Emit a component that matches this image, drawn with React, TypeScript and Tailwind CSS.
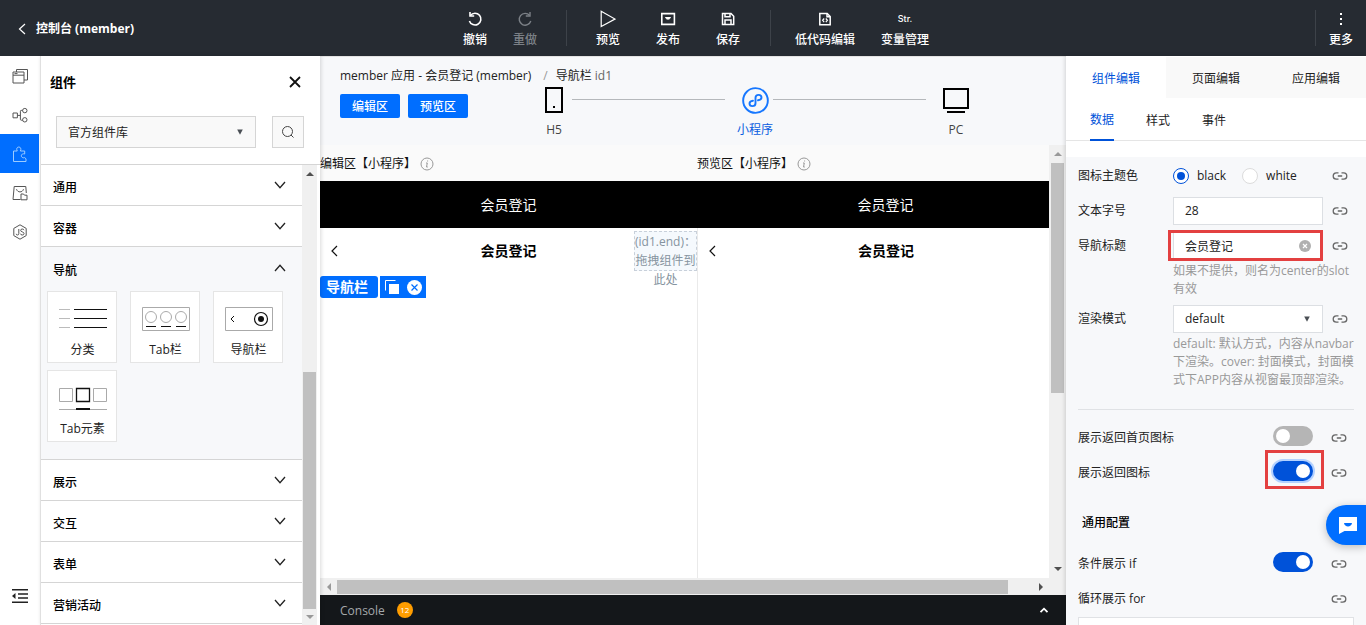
import React, { useState } from "react";

type IconProps = { className?: string };

const ToolIcons = {
  undo: (
    <svg viewBox="0 0 16 16" className="size-4" fill="none" stroke="currentColor" strokeWidth="1.6">
      <path d="M3.4 4.400A5.900 5.900 0 1 1 2.400 10" />
      <path d="M3 1v4h4.200" />
    </svg>
  ),
  redo: (
    <svg viewBox="0 0 16 16" className="size-4" fill="none" stroke="currentColor" strokeWidth="1.4">
      <path d="M12.6 4.4A5.9 5.9 0 1 0 13.800 10" />
      <path d="M13 1v4H8.800" />
    </svg>
  ),
  play: (
    <svg viewBox="0 0 16 18" className="h-[18px] w-4" fill="none" stroke="currentColor" strokeWidth="1.2">
      <path d="M1.2 1.2v15.4L15 9z" />
    </svg>
  ),
  publish: (
    <svg viewBox="0 0 16 16" className="size-4" fill="none" stroke="currentColor" strokeWidth="1.6">
      <path d="M1.8 2.600h12.600v10.800h-12.600z" />
      <path d="M5.500 6.500c.6 2.200 4.400 2.200 5 0z" fill="currentColor" strokeWidth="1" />
    </svg>
  ),
  save: (
    <svg viewBox="0 0 16 16" className="size-4" fill="none" stroke="currentColor" strokeWidth="1.5">
      <path d="M2.500 2.500h8.500l2.700 2.700v8.300H2.500z" />
      <path d="M5 2.500v3.300h5V2.500M5 13.500V9h6v4.500" />
    </svg>
  ),
  code: (
    <svg viewBox="0 0 16 16" className="size-4" fill="none" stroke="currentColor" strokeWidth="1.5">
      <path d="M2.800 2.500h7.400l3 3v8.200H2.800z" />
      <path d="M10 2.500v3.200h3" />
      <path d="M7.200 7.500 5.600 9.300l1.600 1.800M8.800 7.500l1.600 1.800-1.600 1.800" strokeWidth="1.200" />
    </svg>
  ),
  more: (
    <svg viewBox="0 0 16 16" className="size-4" fill="currentColor">
      <path d="M7 2h2v2H7zM7 7h2v2H7zM7 12h2v2H7z" />
    </svg>
  ),
};

function ToolButton({ label, icon, dim, wide }: { label: string; icon: React.ReactNode; dim?: boolean; wide?: boolean }) {
  return (
    <button
      className={
        "flex shrink-0 flex-col items-center text-xs leading-4 " +
        (wide ? "px-[18px] " : "px-[13px] ") +
        (dim ? "text-[#7c8187]" : "text-white")
      }
    >
      <span className="flex h-5 items-center">{icon}</span>
      <span className="mt-[3px] font-medium">{label}</span>
    </button>
  );
}

function Divider() {
  return <span className="h-9 w-px shrink-0 bg-[#3d4249]" />;
}

function Header() {
  return (
    <header className="flex h-14 shrink-0 items-center bg-[#262b32] text-white">
      <div className="min-w-0 flex-1 pt-[2px]">
        <a href="#" className="flex items-center gap-[10px] pl-[18px] text-xs font-bold">
          <svg viewBox="0 0 8 12" className="h-3 w-2" fill="none" stroke="currentColor" strokeWidth="1.2">
            <path d="M7 1 1.5 6 7 11" />
          </svg>
          控制台 (member)
        </a>
      </div>
      <nav className="ml-[26px] flex shrink-0 items-center">
        <ToolButton label="撤销" icon={ToolIcons.undo} />
        <ToolButton label="重做" icon={ToolIcons.redo} dim />
        <span className="flex w-7 justify-center pl-[5px]"><Divider /></span>
        <ToolButton label="预览" icon={ToolIcons.play} wide />
        <ToolButton label="发布" icon={ToolIcons.publish} wide />
        <ToolButton label="保存" icon={ToolIcons.save} wide />
        <span className="flex w-6 justify-center"><Divider /></span>
        <ToolButton label="低代码编辑" icon={ToolIcons.code} />
        <ToolButton
          label="变量管理"
          icon={<span className="font-['Inter','Liberation_Sans',sans-serif] text-[9px] font-medium">Str.</span>}
        />
      </nav>
      <div className="flex flex-1 items-center justify-end">
        <Divider />
        <ToolButton label="更多" icon={ToolIcons.more} />
      </div>
    </header>
  );
}

const railIcons: { name: string; art: React.ReactNode }[] = [
  {
    name: "页面",
    art: (
      <>
        <path d="M1 4h11v11H1zM1 7.2h11M2.5 5.6h3" />
        <path d="M4.5 4V1.5h11V12H12" />
      </>
    ),
  },
  {
    name: "数据",
    art: (
      <>
        <path d="M1 6h4.4v4.8H1zM5.4 8.4h3M10.6 3.4H9.2q-.8 0-.8.8v8.2q0 .8.8.8h1.4" />
        <circle cx="12.8" cy="3.6" r="2.2" />
        <circle cx="12.8" cy="12.8" r="2.2" />
      </>
    ),
  },
  {
    name: "组件",
    art: (
      <path d="M1.500 5h3.700C4 2.500 5.200 1 6.800 1s2.800 1.500 1.600 4h4.300v3c-2-.7-3.400.4-3.400 1.800s1.400 2.500 3.400 1.800l1.300 1.200v2.700h-12.500z" />
    ),
  },
  {
    name: "素材",
    art: (
      <>
        <path d="M8.500 14.500H1L2.200 1.500h11.600L14.300 8" />
        <path d="M4.500 4.200c1 3.600 6 3.600 7 0" />
        <path d="M9 9h2.500l1 1.200h2.500v4.600H9z" />
      </>
    ),
  },
  {
    name: "脚本",
    art: (
      <>
        <path d="M8 .8 14.200 4.400v7.200L8 15.200 1.800 11.600V4.400z" />
        <path d="M6.800 5v4.600q0 1.400-1.300 1.400T4.200 9.800M12 6.200Q11.600 5 10.200 5T8.700 6.400q0 1.100 1.600 1.500t1.700 1.600q0 1.500-1.700 1.500T8.500 9.700" />
      </>
    ),
  },
];

function Rail() {
  return (
    <nav className="flex w-10 shrink-0 flex-col bg-white">
      {railIcons.map((item) => (
        <button
          key={item.name}
          aria-label={item.name}
          className={
            "flex h-[39px] w-[39px] items-center justify-center " +
            (item.name === "组件" ? "bg-[#006eff] text-[#9ccbff]" : "text-[#555]")
          }
        >
          <svg viewBox="0 0 16 16" className="size-4 overflow-visible" fill="none" stroke="currentColor" strokeWidth="1">
            {item.art}
          </svg>
        </button>
      ))}
      <button aria-label="收起" className="mt-auto mb-[21px] flex w-[39px] justify-center text-[#222]">
        <svg viewBox="0 0 16 16" className="size-4" fill="none" stroke="currentColor" strokeWidth="1.500">
          <path d="M0 1.700h16M6 6h10M6 10h10M0 14.300h16" />
          <path d="M3.500 5v6L0 8z" fill="currentColor" stroke="none" />
        </svg>
      </button>
    </nav>
  );
}

function Chevron({ up }: { up?: boolean }) {
  return (
    <svg viewBox="0 0 12 8" className="h-2 w-3" fill="none" stroke="#222" strokeWidth="1.300">
      <path d={up ? "M1 7 6 1.300 11 7" : "M1 1 6 6.700 11 1"} />
    </svg>
  );
}

function Arrow({ dir, className }: { dir: "up" | "down" | "left" | "right" } & IconProps) {
  const d = { up: "M4 2 8 6H0z", down: "M0 2h8L4 6z", left: "M2 4 6 0v8z", right: "M6 4 2 0v8z" }[dir];
  return (
    <svg viewBox="0 0 8 8" className={"size-2 " + (className ?? "text-[#505050]")} fill="currentColor">
      <path d={d} />
    </svg>
  );
}

function SelectArrow() {
  return (
    <svg viewBox="0 0 6 6" className="pointer-events-none absolute top-0 right-[13px] bottom-0 my-auto size-[6px]" fill="#4a4f55">
      <path d="M.2.400h5.600L3 5.800z" />
    </svg>
  );
}

const sectionsBefore = ["通用", "容器"];
const sectionsAfter = ["展示", "交互", "表单", "营销活动"];

const cards: { label: string; art: React.ReactNode }[] = [
  {
    label: "分类",
    art: (
      <>
        <path d="M0 6.500h11M0 15.500h11M0 24.500h11" stroke="#bbb" />
        <path d="M15 6.500h33M15 15.500h33M15 24.500h33" stroke="#111" />
      </>
    ),
  },
  {
    label: "Tab栏",
    art: (
      <>
        <path d="M.5 4.500h47v23H.5z" stroke="#aaa" />
        <circle cx="9" cy="14" r="5.500" stroke="#aaa" />
        <circle cx="24" cy="14" r="5.500" stroke="#aaa" />
        <circle cx="39" cy="14" r="5.500" stroke="#aaa" />
        <path d="M4 23.500h10M19 23.500h10M34 23.500h10" stroke="#111" />
      </>
    ),
  },
  {
    label: "导航栏",
    art: (
      <>
        <path d="M.5 4.500h47v23H.5z" stroke="#aaa" />
        <path d="M9 13 6 16l3 3" stroke="#111" />
        <circle cx="36" cy="16" r="6.500" stroke="#111" strokeWidth="1.200" />
        <circle cx="36" cy="16" r="3" fill="#111" />
      </>
    ),
  },
  {
    label: "Tab元素",
    art: (
      <>
        <path d="M.5 6.500h13v13H.5zM34.500 6.500h13v13h-13zM0 27.500h48" stroke="#aaa" />
        <path d="M17.500 6.500h13v13h-13z" stroke="#111" strokeWidth="1.300" />
        <path d="M17 27h14" stroke="#111" strokeWidth="2" />
      </>
    ),
  },
];

function SectionRow({ label, open }: { label: string; open?: boolean }) {
  return (
    <button
      aria-expanded={!!open}
      className={
        "flex h-[41px] w-full shrink-0 items-center justify-between pr-4 pl-3 text-xs font-medium text-black " +
        (open ? "" : "border-b border-[#d5d5d5]")
      }
    >
      <span className="pt-[6px]">{label}</span>
      <Chevron up={open} />
    </button>
  );
}

function ComponentPanel() {
  return (
    <aside className="z-10 flex w-[280px] shrink-0 flex-col border-l border-[#e0e0e0] bg-white shadow-[1px_0_4px_rgba(0,0,0,0.150)]">
      <div className="flex items-center justify-between pt-4 pr-[19px] pl-[9px]">
        <h2 className="text-[13px] leading-5 font-bold text-black">组件</h2>
        <button aria-label="关闭">
          <svg viewBox="0 0 12 12" className="size-3" stroke="#111" strokeWidth="1.800">
            <path d="m1 1 10 10M11 1 1 11" />
          </svg>
        </button>
      </div>
      <div className="mt-6 flex gap-4 pr-4 pl-[15px]">
        <div className="relative flex-1">
          <select
            aria-label="组件库"
            className="h-8 w-full appearance-none border border-[#d5d5d5] bg-[#f9f9f9] px-[11px] pt-px text-xs text-[#222]"
          >
            <option>官方组件库</option>
          </select>
          <SelectArrow />
        </div>
        <button aria-label="搜索" className="flex size-8 items-center justify-center border border-[#d5d5d5] bg-[#f9f9f9]">
          <svg viewBox="0 0 12 12" className="size-3" fill="none" stroke="#444" strokeWidth="1">
            <circle cx="5.500" cy="5.500" r="5" />
            <path d="m9 9 2.500 2.500" />
          </svg>
        </button>
      </div>
      <div className="mt-4 flex min-h-0 flex-1 border-t border-[#d5d5d5]">
        <div className="min-w-0 flex-1 overflow-hidden">
          {sectionsBefore.map((s) => (
            <SectionRow key={s} label={s} />
          ))}
          <div className="border-b border-[#d5d5d5] bg-[#f7f8fa] pb-[17px]">
            <SectionRow label="导航" open />
            <div className="grid grid-cols-3 gap-x-[13px] gap-y-[7px] pt-[3px] pr-[19px] pl-[6px]">
              {cards.map((c) => (
                <button key={c.label} className="flex h-[72px] flex-col items-center border border-[#e5e5e5] bg-white pt-[11px] pl-px text-xs text-[#222]">
                  <svg viewBox="0 0 48 32" className="h-8 w-12" fill="none">
                    {c.art}
                  </svg>
                  <span className="mt-[7px] leading-4">{c.label}</span>
                </button>
              ))}
            </div>
          </div>
          {sectionsAfter.map((s) => (
            <SectionRow key={s} label={s} />
          ))}
        </div>
        <div className="mr-[3px] flex w-[15px] flex-col items-center bg-[#f0f0f0] pr-px pl-px">
          <span className="flex h-[18px] items-center"><Arrow dir="up" /></span>
          <span className="flex-[189]" />
          <span className="w-full flex-[236] bg-[#c0c0c0]" />
          <span className="flex h-4 items-center"><Arrow dir="down" className="text-[#999]" /></span>
        </div>
      </div>
    </aside>
  );
}

function Info() {
  return (
    <svg viewBox="0 0 14 14" className="size-[14px]" fill="none" stroke="#999" strokeWidth="1">
      <circle cx="7" cy="7" r="6" />
      <path d="M7.600 3.500v1M6 6h1.300l-.8 4h1.300" />
    </svg>
  );
}

function Step({ label, active, children }: { label: string; active?: boolean; children: React.ReactNode }) {
  return (
    <button className={"flex w-9 shrink-0 flex-col items-center text-xs " + (active ? "text-[#0a5ce0]" : "text-[#444]")}>
      <span className="flex h-[26px] items-center">{children}</span>
      <span className="mt-[9px] leading-4 whitespace-nowrap">{label}</span>
    </button>
  );
}

function DeviceBar() {
  return (
    <div className="h-[89px] shrink-0 border-t border-[#e3e3e3] bg-[#f7f8fa] pl-5 text-xs">
      <nav className="flex h-[30px] items-end whitespace-nowrap">
        <a href="#" className="leading-[22px] text-[#222]">member 应用 - 会员登记 (member)</a>
        <span className="mr-2 ml-3 leading-[22px] text-[#999]">/</span>
        <span className="leading-[22px] text-[#222]">导航栏 <span className="text-[#666]">id1</span></span>
      </nav>
      <div className="flex items-start">
        <div className="mt-[7px] flex shrink-0 gap-2">
          <button className="h-6 rounded-[2px] bg-[#006eff] px-3 pt-[2px] font-medium text-white">编辑区</button>
          <button className="h-6 rounded-[2px] bg-[#006eff] px-3 pt-[2px] font-medium text-white">预览区</button>
        </div>
        <div className="mr-[92px] ml-[68px] flex flex-1">
          <Step label="H5">
            <svg viewBox="0 0 18 26" className="h-[26px] w-[18px]" fill="none" stroke="#000" strokeWidth="2">
              <path d="M1 1h16v24H1z" />
              <path d="M8 20h2" />
            </svg>
          </Step>
          <span className="mt-3 mr-3 h-px flex-1 bg-[#b5b8bb]" />
          <Step label="小程序" active>
            <svg viewBox="0 0 28 28" className="size-[27px]" fill="none" stroke="#1677ff" strokeWidth="2">
              <circle cx="14" cy="14" r="12.800" />
              <path d="M11.400 14.200c-2 .2-3.600 1.300-3.600 2.900s1.300 2.700 2.900 2.700c1.900 0 3.300-1.300 3.300-3v-5.600c0-1.700 1.400-3 3.300-3 1.600 0 2.900 1.100 2.900 2.700s-1.600 2.700-3.600 2.900" strokeLinecap="round" />
            </svg>
          </Step>
          <span className="mt-3 mr-3 h-px flex-1 bg-[#b5b8bb]" />
          <Step label="PC">
            <svg viewBox="0 0 26 26" className="size-[26px]" fill="none" stroke="#000" strokeWidth="2">
              <path d="M1 2h24v19H1zM4 25h18" />
            </svg>
          </Step>
        </div>
      </div>
    </div>
  );
}

function PhonePane({ title, children, split }: { title: string; children?: React.ReactNode; split?: boolean }) {
  return (
    <section className="flex w-[377px] shrink-0 flex-col">
      <div className="flex h-9 shrink-0 items-center gap-1 bg-[#fafafa] pt-[2px] text-xs text-[#111]">
        <span>{title}</span>
        <Info />
      </div>
      <div className="flex h-[47px] shrink-0 items-center justify-center bg-black text-sm text-white">会员登记</div>
      <div className={"flex-1 bg-white " + (split ? "border-l border-[#eaeaea]" : "")}>
        <div className="flex h-[46px] items-center pl-[11px]">
          <button aria-label="返回" className="w-2">
            <svg viewBox="0 0 7 12" className="h-3 w-[7px]" fill="none" stroke="#111" strokeWidth="1.200">
              <path d="M6 1 1 6l5 5" />
            </svg>
          </button>
          <span className="flex-1 pr-[19px] text-center text-sm font-bold text-black">会员登记</span>
        </div>
        {children}
      </div>
    </section>
  );
}

function Canvas() {
  return (
    <div className="flex min-h-0 flex-1">
      <div className="flex min-w-0 flex-1 flex-col">
        <div className="flex min-h-0 flex-1 overflow-hidden">
          <div className="relative flex">
            <PhonePane title="编辑区【小程序】">
              <div className="flex gap-[2px] pt-[2px]">
                <span className="h-[22px] rounded-[3px] bg-[#006eff] pr-[10px] pl-[6px] text-sm leading-[22px] font-bold text-white">导航栏</span>
                <span className="flex h-[22px] items-center gap-[7px] bg-[#006eff] px-1">
                  <button aria-label="复制">
                    <svg viewBox="0 0 16 16" className="size-4">
                      <path d="M1.500 11.500v-10h10" fill="none" stroke="#fff" />
                      <path d="M5 5h10v10H5z" fill="#fff" />
                    </svg>
                  </button>
                  <button aria-label="删除">
                    <svg viewBox="0 0 15 15" className="size-[15px]">
                      <circle cx="7.500" cy="7.500" r="7.500" fill="#fff" />
                      <path d="m4.500 4.500 6 6M10.500 4.500l-6 6" stroke="#006eff" strokeWidth="1.200" />
                    </svg>
                  </button>
                </span>
              </div>
            </PhonePane>
            <div className="absolute top-[86px] right-0 h-10 w-[63px] border border-dashed border-[#c8d0da] bg-[#f5f9fd] text-center text-xs leading-[19px] text-[#8694a0]">
              (id1.end)：拖拽组件到此处
            </div>
          </div>
          <PhonePane title="预览区【小程序】" split />
        </div>
        <div className="flex h-[17px] shrink-0 bg-[#f0f0f0] pt-[2px] pb-px">
          <span className="flex w-[17px] items-center justify-center"><Arrow dir="left" className="text-[#999]" /></span>
          <span className="flex-[672] bg-[#c0c0c0]" />
          <span className="flex-[24]" />
          <span className="flex w-[17px] items-center justify-center"><Arrow dir="right" /></span>
        </div>
      </div>
      <div className="flex w-[17px] flex-col items-center bg-[#f0f0f0] pr-[2px] pl-[2px]">
        <span className="flex h-[18px] items-center"><Arrow dir="up" className="text-[#999]" /></span>
        <span className="w-full flex-[230] bg-[#c0c0c0]" />
        <span className="flex-[168]" />
        <span className="flex h-4 items-center"><Arrow dir="down" /></span>
        <span className="h-[18px]" />
      </div>
    </div>
  );
}

function Center() {
  return (
    <main className="flex min-w-0 flex-1 flex-col">
      <DeviceBar />
      <Canvas />
      <button className="flex h-[30px] shrink-0 items-center bg-[#14171a] pr-[17px] pl-5 text-xs text-[#a5a8ab]">
        <span className="pt-px">Console</span>
        <span className="ml-3 flex size-4 items-center justify-center rounded-full bg-[#ff9d00] text-[8px] text-white">12</span>
        <svg viewBox="0 0 10 6" className="ml-auto h-[6px] w-[10px]" fill="none" stroke="#fff" strokeWidth="1.800">
          <path d="m1.500 5.200 3.500-3.500 3.500 3.500" />
        </svg>
      </button>
    </main>
  );
}

function LinkButton() {
  return (
    <button aria-label="绑定数据" className="ml-auto shrink-0">
      <svg viewBox="0 0 16 10" className="h-[10px] w-4" fill="none" stroke="#666" strokeWidth="1.300">
        <path d="M6.500 1.800H4.400a3.200 3.200 0 0 0 0 6.400h2.100M9.500 1.800h2.100a3.200 3.200 0 0 1 0 6.400H9.500M5.800 5h4.400" />
      </svg>
    </button>
  );
}

function Field({ label, htmlFor, children }: { label: string; htmlFor: string; children: React.ReactNode }) {
  return (
    <div className="flex h-[35px] items-center">
      <label htmlFor={htmlFor} className="w-[95px] shrink-0 pt-px">{label}</label>
      <div className="relative flex w-[150px] items-center">{children}</div>
      <LinkButton />
    </div>
  );
}

function ToggleRow({ label, id, value, halo }: { label: string; id: string; value?: boolean; halo?: boolean }) {
  return (
    <div className="flex h-[35px] items-center">
      <label htmlFor={id} className="flex-1">{label}</label>
      {value !== undefined && (
        <span className="relative mr-[18px] mb-[3px] flex">
          <input
            id={id}
            type="checkbox"
            role="switch"
            defaultChecked={value}
            className={
              "h-5 w-10 appearance-none rounded-full bg-[#b5b5b5] before:mt-[3px] before:ml-[3px] before:block before:size-[14px] before:rounded-full before:bg-white checked:bg-[#0052d9] checked:before:ml-[23px] " +
              (halo ? "shadow-[0_0_0_2px_#b3d1ff]" : "")
            }
          />
          {halo && <span className="pointer-events-none absolute -top-[11px] -right-[11px] -bottom-2 -left-2 border-[3px] border-[#e34040]" />}
        </span>
      )}
      <LinkButton />
    </div>
  );
}

function Radio({ id, label, checked, onChange }: { id: string; label: string; checked: boolean; onChange: () => void }) {
  return (
    <label htmlFor={id} className="flex items-center gap-2">
      <input
        id={id}
        type="radio"
        name="icon-theme"
        checked={checked}
        onChange={onChange}
        className="flex size-4 appearance-none items-center justify-center rounded-full border border-[#dcdcdc] bg-white before:size-2 before:rounded-full checked:border-[#0052d9] checked:before:bg-[#0052d9]"
      />
      {label}
    </label>
  );
}

function PropertyPanel() {
  const [theme, setTheme] = useState("black");
  const [title, setTitle] = useState("会员登记");
  return (
    <aside className="z-10 flex w-[300px] shrink-0 flex-col bg-white text-xs text-[#222] shadow-[-1px_0_4px_rgba(0,0,0,0.150)]">
      <div className="flex h-[42px] shrink-0 pt-px">
        <button className="flex-1 bg-white pt-[3px] text-[#0052d9]">组件编辑</button>
        <button className="flex-1 bg-[#f9f9f9] pt-[3px]">页面编辑</button>
        <button className="flex-1 bg-[#f9f9f9] pt-[3px]">应用编辑</button>
      </div>
      <div className="flex h-[43px] shrink-0 gap-8 border-b border-[#e5e5e5] pl-6">
        <button className="-mb-px border-b-2 border-[#0052d9] pt-[3px] text-[#0052d9]">数据</button>
        <button className="pt-[3px]">样式</button>
        <button className="pt-[3px]">事件</button>
      </div>
      <div className="mt-4 min-h-0 flex-1 overflow-hidden bg-[#f7f8fa] px-3 pt-px">
        <div className="flex h-[35px] items-center">
          <span className="w-[95px] shrink-0">图标主题色</span>
          <div className="flex gap-4">
            <Radio id="theme-black" label="black" checked={theme === "black"} onChange={() => setTheme("black")} />
            <Radio id="theme-white" label="white" checked={theme === "white"} onChange={() => setTheme("white")} />
          </div>
          <span className="ml-auto flex pr-[6px]"><LinkButton /></span>
        </div>
        <div className="pr-[6px]">
          <Field label="文本字号" htmlFor="font-size">
            <input id="font-size" defaultValue="28" className="h-7 w-full border border-[#dcdfe3] bg-white px-[11px]" />
          </Field>
          <Field label="导航标题" htmlFor="nav-title">
            <input id="nav-title" value={title} onChange={(e) => setTitle(e.target.value)} className="h-7 w-full border border-[#dcdfe3] bg-white px-[11px]" />
            <button aria-label="清空" onClick={() => setTitle("")} className="absolute right-3">
              <svg viewBox="0 0 12 12" className="size-3">
                <circle cx="6" cy="6" r="6" fill="#b0b0b0" />
                <path d="m4 4 4 4M8 4 4 8" stroke="#fff" strokeWidth="1.200" />
              </svg>
            </button>
            <span className="pointer-events-none absolute -top-[2px] right-0 -bottom-px -left-[5px] border-[3px] border-[#e34040]" />
          </Field>
        </div>
        <p className="-mt-px ml-[95px] pb-[3px] leading-[18px] whitespace-nowrap text-[#999]">
          如果不提供，则名为center的slot<br />有效
        </p>
        <div className="pr-[6px]">
          <Field label="渲染模式" htmlFor="render-mode">
            <select id="render-mode" className="h-7 w-full appearance-none border border-[#dcdfe3] bg-white px-[11px] pt-px">
              <option>default</option>
            </select>
            <SelectArrow />
          </Field>
        </div>
        <p className="-mt-px ml-[95px] pb-[3px] leading-[18px] whitespace-nowrap text-[#999]">
          default: 默认方式，内容从navbar<br />下渲染。cover: 封面模式，封面模<br />式下APP内容从视窗最顶部渲染。
        </p>
        <hr className="mt-[17px] mb-[10px] border-[#e0e2e5]" />
        <div className="pr-[7px]">
          <ToggleRow label="展示返回首页图标" id="show-home" value={false} />
          <ToggleRow label="展示返回图标" id="show-back" value={true} halo />
          <h3 className="flex h-14 items-center pt-[9px] pl-1 font-medium text-black">通用配置</h3>
          <ToggleRow label="条件展示 if" id="cond-if" value={true} />
          <ToggleRow label="循环展示 for" id="loop-for" />
        </div>
        <div className="mt-px h-8 border border-[#e0e2e5] bg-white" />
      </div>
    </aside>
  );
}

export default function App() {
  return (
    <div className="relative flex h-screen flex-col overflow-hidden bg-white font-['Open_Sans','Noto_Sans_CJK_SC',sans-serif]">
      <Header />
      <div className="flex min-h-0 flex-1">
        <Rail />
        <ComponentPanel />
        <Center />
        <PropertyPanel />
      </div>
      <button
        aria-label="在线客服"
        className="absolute right-0 bottom-20 z-20 flex h-10 w-10 items-center rounded-l-full bg-[#006eff] pl-[13px] shadow-[0_2px_8px_rgba(0,0,0,0.250)]"
      >
        <svg viewBox="0 0 18 17" className="h-[17px] w-[18px]">
          <path d="M0 0h18v14H5.500L0 17z" fill="#fff" />
          <path d="M5 6h8c-.4 4.600-7.600 4.600-8 0z" fill="#006eff" />
        </svg>
      </button>
    </div>
  );
}
